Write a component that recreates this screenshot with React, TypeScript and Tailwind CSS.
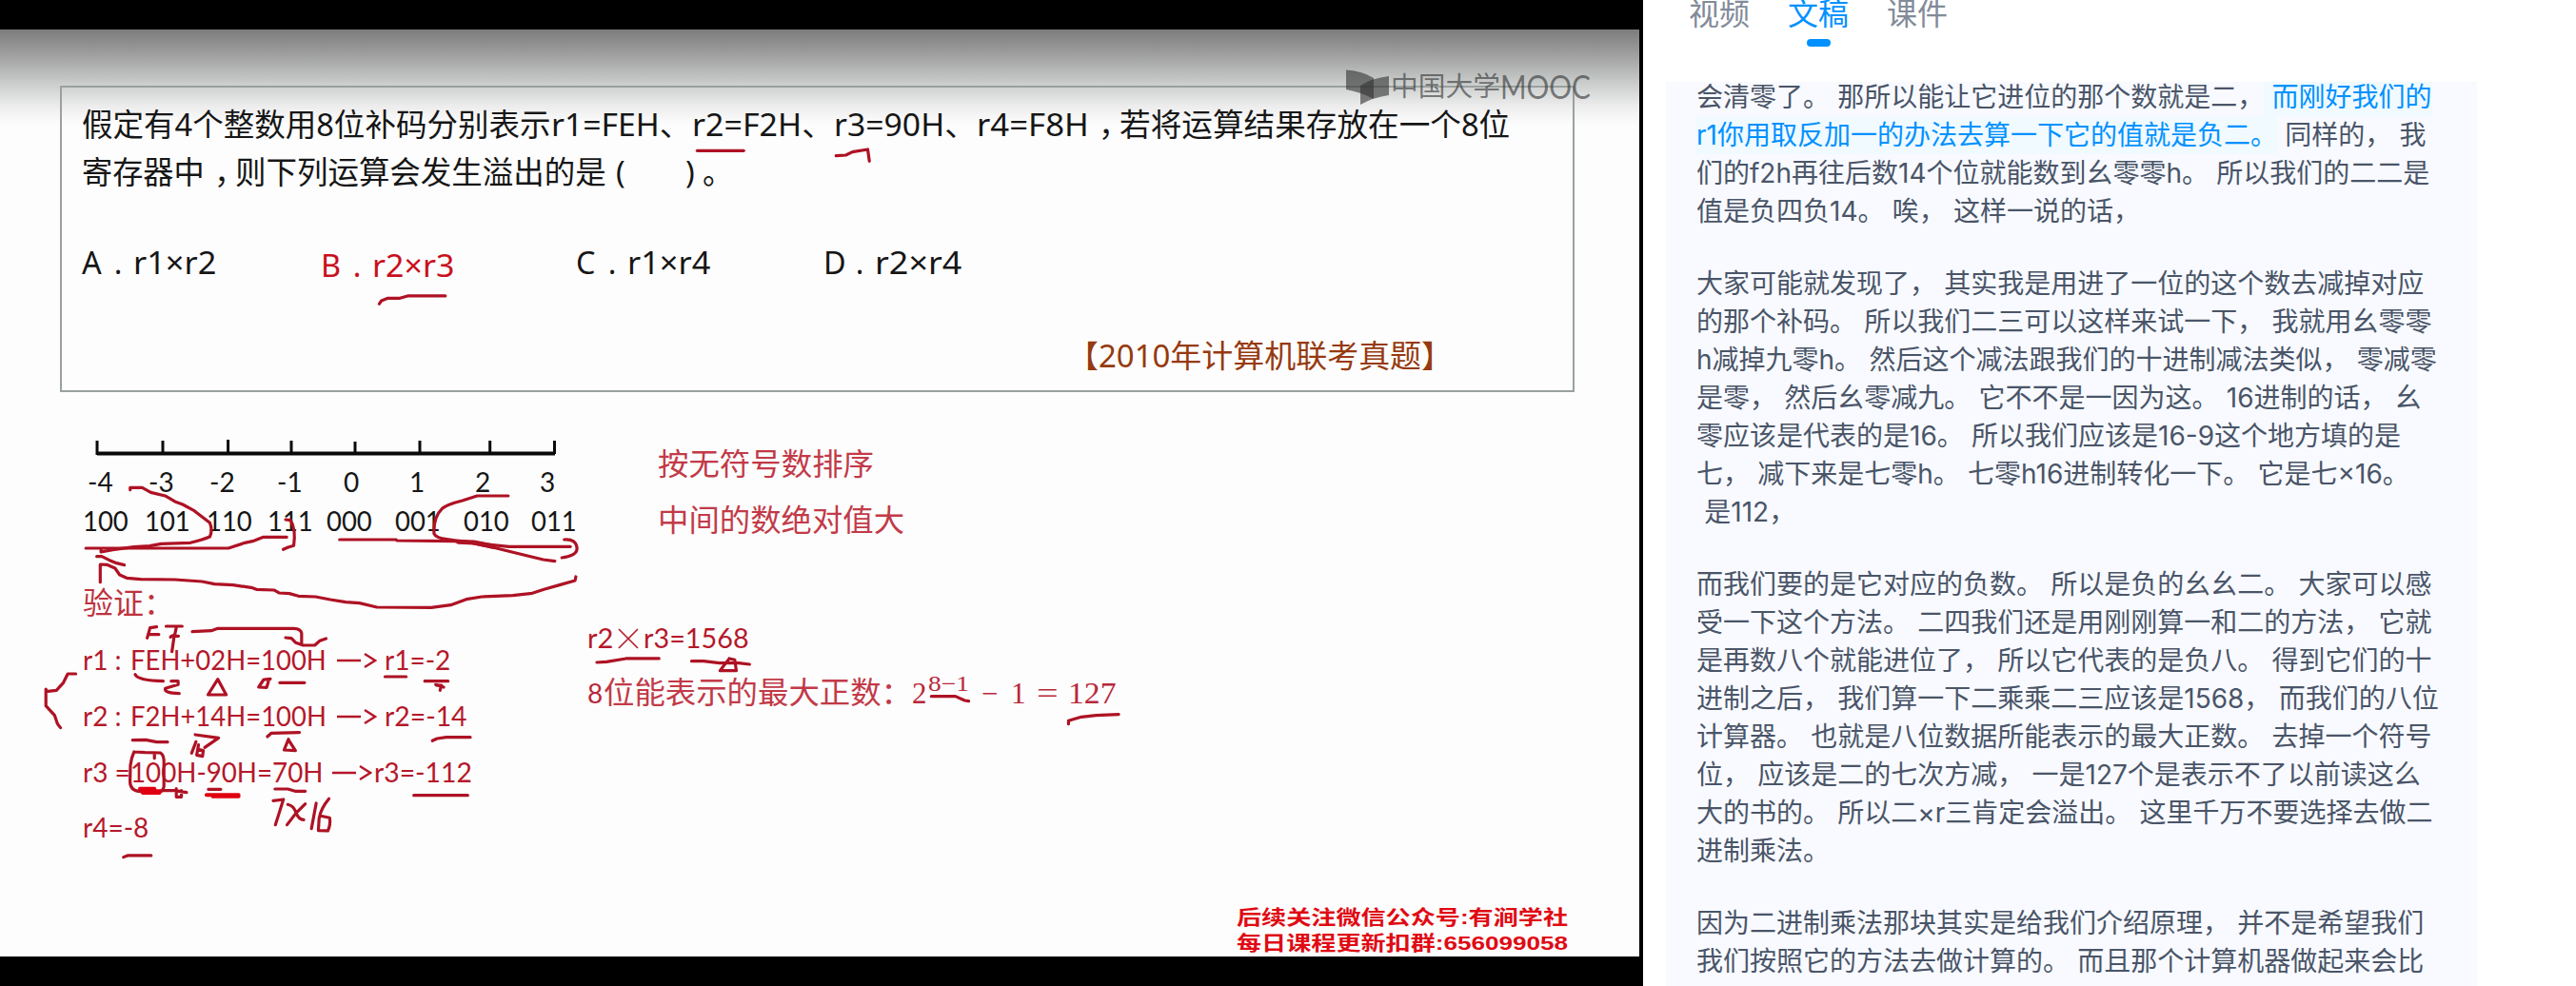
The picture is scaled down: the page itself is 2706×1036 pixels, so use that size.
import React, { useLayoutEffect, useRef } from "react";

const YAHEI = "font-['Noto_Sans','Noto_Sans_CJK_SC',sans-serif]";
const CALIBRI = "font-['Lato','Noto_Sans_CJK_SC',sans-serif]";
const CAMBRIA = "font-['Liberation_Serif','Noto_Sans_CJK_SC',serif]";

/* A run of text stretched or condensed to an exact width. */
function Fit({ w, className = "", children }: { w: number; className?: string; children: React.ReactNode }) {
  const ref = useRef<HTMLSpanElement>(null);
  useLayoutEffect(() => {
    const apply = () => {
      const el = ref.current;
      if (el && el.offsetWidth) el.style.transform = `scaleX(${w / el.offsetWidth})`;
    };
    apply();
    document.fonts?.ready.then(apply);
  }, [w]);
  return (
    <span className={`inline-block shrink-0 ${className}`} style={{ width: w }}>
      <span ref={ref} className="inline-block origin-left whitespace-pre">
        {children}
      </span>
    </span>
  );
}

function Option({ letter, expr, exprW = 87, className }: { letter: string; expr: string; exprW?: number; className: string }) {
  return (
    <div className={`flex shrink-0 ${className}`}>
      <span className="w-[22px]">{letter}</span>
      <span className="w-[32px] text-center">.</span>
      <Fit w={exprW}>{expr}</Fit>
    </div>
  );
}

function Question() {
  return (
    <section className={`ml-[63px] mt-[59px] h-[322px] w-[1591px] border-2 border-[#9aa1a0] pl-[21px] pt-[13px] text-[32.4px] leading-[50px] text-[#161616] ${YAHEI}`}>
      <div className="flex h-[50px] whitespace-pre">
        <Fit w={493}>假定有4个整数用8位补码分别表示</Fit>
        <Fit w={148}>r1=FEH、</Fit>
        <Fit w={149}>r2=F2H、</Fit>
        <Fit w={150}>r3=90H、</Fit>
        <Fit w={118}>r4=F8H</Fit>
        <span className="w-[32px] overflow-visible pl-[10px]">，</span>
        <Fit w={410}>若将运算结果存放在一个8位</Fit>
      </div>
      <div className="flex h-[49px] whitespace-pre">
        <Fit w={129}>寄存器中</Fit>
        <span className="w-[32px] overflow-visible pl-[10px]">，</span>
        <Fit w={390}>则下列运算会发生溢出的是</Fit>
        <span className="ml-[10px] w-[73px]">(</span>
        <span className="w-[18px]">)</span>
        <span>。</span>
      </div>
      <div className="mt-[46px] flex h-[50px]">
        <Option letter="A" expr="r1×r2" className="w-[251px]" />
        <Option letter="B" expr="r2×r3" exprW={86} className="w-[268px] pt-[3px] text-[#c8101c]" />
        <Option letter="C" expr="r1×r4" className="w-[260px]" />
        <Option letter="D" expr="r2×r4" exprW={91} className="w-[200px]" />
      </div>
      <div className="mt-[48px] h-[50px] pl-[1035px] text-[#963a10]">
        <Fit w={405}>【2010年计算机联考真题】</Fit>
      </div>
    </section>
  );
}

const LABELS: [string, string][] = [
  ["-4", "w-[64px]"],
  ["-3", "w-[64px]"],
  ["-2", "w-[71px]"],
  ["-1", "w-[70px]"],
  ["0", "w-[69px]"],
  ["1", "w-[69px]"],
  ["2", "w-[68px]"],
  ["3", "w-[30px]"],
];
const CODES: [string, string][] = [
  ["100", "w-[65px]"],
  ["101", "w-[65px]"],
  ["110", "w-[64px]"],
  ["111", "w-[62px]"],
  ["000", "w-[72px]"],
  ["001", "w-[72px]"],
  ["010", "w-[71px]"],
  ["011", "w-[50px]"],
];

function Step({ name, eq, eqW, gap, result, resW }: { name: string; eq: string; eqW: number; gap: string; result: string; resW: number }) {
  return (
    <div className="flex h-[59px]">
      <span className="w-[50px] whitespace-pre">{name}</span>
      <Fit w={eqW}>{eq}</Fit>
      <span className={`flex items-center ${gap}`}>
        <svg width="42" height="18" viewBox="0 0 42 18" className="shrink-0" fill="none" stroke="currentColor" strokeWidth="2.4">
          <path d="M0 9H25M29 2L40 9L29 16" />
        </svg>
      </span>
      <Fit w={resW}>{result}</Fit>
    </div>
  );
}

function NumberLine() {
  return (
    <div className="w-[530px] shrink-0 pt-[49px]">
      <svg className="ml-[13px] block" width="486" height="20" fill="none" stroke="#0a0a0a" strokeWidth="3">
        <path d="M2 15.5H483" strokeWidth="4" />
        <path d="M2 2V17M71 2V15M139.600 1V15M206 2V15M273 3V17M341 2V15M414.700 2V15M482.500 2V16" />
      </svg>
      <div className={`text-[28px] leading-[40px] text-[#161616] ${CALIBRI}`}>
        <div className="mt-[5px] flex h-[41px] pl-[5px]">
          {LABELS.map(([t, w]) => (
            <span key={t} className={w}>{t}</span>
          ))}
        </div>
        <div className="flex h-[40px]">
          {CODES.map(([t, w]) => (
            <span key={t} className={w}>
              <Fit w={48}>{t}</Fit>
            </span>
          ))}
        </div>
      </div>
      <div className={`mt-[47px] h-[40px] text-[32px] leading-[40px] text-[#bd3340] ${CAMBRIA}`}>验证：</div>
      <div className={`mt-[10px] text-[28px] leading-[59px] text-[#b5182a] ${CALIBRI}`}>
        <Step name="r1 :" eq="FEH+02H=100H" eqW={206} gap="ml-[11px] w-[50px]" result="r1=-2" resW={69} />
        <Step name="r2 :" eq="F2H+14H=100H" eqW={206} gap="ml-[11px] w-[50px]" result="r2=-14" resW={87} />
        <Step name="r3 =" eq="100H-90H=70H" eqW={202} gap="ml-[10px] w-[44px]" result="r3=-112" resW={103} />
        <div className="-mt-px"><Fit w={69}>r4=-8</Fit></div>
      </div>
    </div>
  );
}

function Derivation() {
  return (
    <div className="pt-[47px] text-[#b8283a]">
      <div className={`pl-[74px] text-[32px] leading-[59px] text-[#c23a48] ${CAMBRIA}`}>
        <div className="h-[59px]"><Fit w={227}>按无符号数排序</Fit></div>
        <div className="h-[59px]"><Fit w={259}>中间的数绝对值大</Fit></div>
      </div>
      <div className={`mt-[65px] flex h-[58px] text-[28px] leading-[57px] text-[#b5182a] ${CALIBRI}`}>
        <Fit w={27}>r2</Fit>
        <span className="flex w-[32px] items-center justify-center">
          <svg width="22" height="22" fill="none" stroke="currentColor" strokeWidth="1.6">
            <path d="M1 1L21 21M21 1L1 21" />
          </svg>
        </span>
        <Fit w={111}>r3=1568</Fit>
      </div>
      <div className="flex h-[57px] leading-[57px]">
        <span className={`w-[17px] text-[28px] ${CALIBRI}`}>8</span>
        <span className={`text-[32px] text-[#c23a48] ${CAMBRIA}`}>
          <Fit w={324}>位能表示的最大正数：</Fit>
        </span>
        <span className={`flex text-[31px] ${CAMBRIA}`}>
          <span className="w-[17px]">2</span>
          <span className="-mt-[10px] w-[56px] text-[23px]"><Fit w={43}>8−1</Fit></span>
          <span className="w-[31px]">−</span>
          <span className="w-[27px]">1</span>
          <span className="w-[33px]"><Fit w={22}>=</Fit></span>
          <Fit w={51}>127</Fit>
        </span>
      </div>
    </div>
  );
}

/* Red pen strokes over the slide, drawn in one group per area of the board. */
function PenStrokes() {
  return (
    <svg className="pointer-events-none absolute left-0 top-0" width="1726" height="1036" fill="none" stroke="#ae1224" strokeWidth="3.200" strokeLinejoin="round" strokeLinecap="round">
      <g className="[&_path]:[vector-effect:non-scaling-stroke]">
        <g transform="scale(.574 .3333)">
          <path d="M1276 475H1361" />
          <path d="M1530 491L1548 489L1560 479L1588 471L1591 508" />
          <path d="M694 958L698 948L710 940H732L746 933H815" />
        </g>
        <g transform="translate(0 430) scale(.40816 .3333)">
          <path d="M335 254V247H366L388 262L425 273L450 291L470 300L500 320L540 358Q548 380 540 402Q520 412 490 421L415 424L385 431L345 434L290 443L260 450L260 443" />
          <path d="M221 438H588L630 421L650 416L678 403H738" />
          <path d="M735 348L748 350Q762 380 756 430L740 436L729 442" />
          <path d="M874 411H1018L1022 414L1170 416L1240 424L1310 433H1468" />
          <path d="M1308 273H1228L1190 288Q1150 300 1138 313Q1115 340 1117 392Q1122 406 1150 410L1210 420L1270 436L1310 448L1350 460L1398 474L1428 479" />
          <path d="M1180 418L1220 420L1270 432" strokeWidth="5" />
          <path d="M1452 411Q1484 408 1485 440Q1484 462 1446 468" />
          <path d="M249 464H262L282 476L300 485L320 491" />
          <path d="M258 545V489L275 490L296 501L308 522L326 532L362 536L450 537L520 543L552 551L600 554L650 563L660 568L705 570L718 579L745 581L768 589L812 591L850 600L890 608L925 611L970 624L1110 625L1160 617L1200 599L1240 591L1320 587L1370 580L1400 568L1440 554L1480 540L1482 528" />
        </g>
        <g transform="translate(0 600) scale(.38265 .3333)">
          <path d="M430 176L412 179L404 211M412 200H436" />
          <path d="M456 174H500M484 178L480 200L468 208M470 205H490M478 206L472 254" />
          <path d="M528 191L580 188L598 181H806Q826 182 828 196V230M784 210L800 212L812 226L832 234H864L878 220L895 213" />
          <path d="M208 324H186L174 352L155 376L126 380V372V425L150 455L158 482L166 494" />
          <path d="M371 326Q378 345 448 347M470 347H489V358L454 370Q448 384 492 386" />
          <path d="M598 341L571 390H621Z" />
          <path d="M742 340L724 342L710 366L732 367L738 344M768 352H836" />
          <path d="M1057 333H1115M1166 347H1230M1198 360H1212L1208 376" />
          <path d="M1196 358L1218 366" />
          <path d="M364 533L400 532L430 539H460M536 516L600 526L562 556M538 538L526 574M545 548L540 580L556 584L558 566L544 562" />
          <path d="M734 522L745 511L822 509M792 530L780 564L811 566L792 532" />
          <path d="M1187 535L1200 528L1225 524H1291" />
          <path d="M368 570L398 572L440 573Q452 580 450 610V680Q448 698 420 698L380 694Q356 690 357 660L358 612Q360 590 368 570M424 576V590" />
          <path d="M384 686H424M390 694H442M392 699H438" stroke="#e00010" strokeWidth="4" />
          <path d="M445 692H480L512 698M484 686V712H498V692M572 688H606" />
          <path d="M567 706H655M584 710H655" stroke="#e00010" strokeWidth="4" />
          <path d="M755 687H790L810 694H838M1136 707H1284" />
          <path d="M750 724L778 720L766 764L756 800M790 736Q806 740 812 760Q820 784 834 784M838 734L812 764L788 800M868 732L855 812M903 718Q880 750 876 780L874 818L900 819Q908 800 905 778L880 772" />
          <path d="M339 902L350 897H415" />
        </g>
        <g transform="translate(580 440) scale(.40816 .3333)">
          <path d="M115 768L140 766L190 756H275M359 764H390L430 770H480L508 774M456 756L470 760L474 794H432L456 756" />
          <path d="M976 875H1038L1062 888L1072 890M1329 962V952L1362 940L1400 935L1458 932" />
        </g>
      </g>
    </svg>
  );
}

function Watermark() {
  return (
    <div className={`absolute left-[1413px] top-[72px] flex h-[40px] text-[#303030]/60 ${YAHEI}`}>
      <svg className="shrink-0" width="48" height="40" fill="currentColor">
        <path d="M1 1.500Q17 2 30 10V32Q17 25 1 22Z" />
        <path d="M46 8Q28 10 16 18V38Q30 30 46 28Z" />
      </svg>
      <span className="text-[28px] leading-[37px]"><Fit w={115}>中国大学</Fit></span>
      <span className="font-['Lato',sans-serif] text-[35px] leading-[37px]"><Fit w={95}>MOOC</Fit></span>
    </div>
  );
}

function Player() {
  return (
    <div className="relative h-[1036px] w-[1726px] shrink-0 overflow-hidden bg-black pt-[31px]">
      <div className="flex h-[974px] w-[1722px] flex-col bg-[#fdfdfd] bg-[linear-gradient(to_bottom,#7c7c7c_0px,#a4a4a4_30px,#cccfce_58px,#ececec_80px,#fdfdfd_100px)] bg-no-repeat">
        <Question />
        <div className="flex pl-[87px]">
          <NumberLine />
          <Derivation />
        </div>
        <div className="mt-auto flex flex-col items-end pr-[75px] font-['Liberation_Sans','Noto_Sans_CJK_SC',sans-serif] text-[21px] font-bold leading-[27px] text-[#e00a14]">
          <div className="h-[27px]"><Fit w={348}>后续关注微信公众号:有涧学社</Fit></div>
          <div className="h-[28px]"><Fit w={348}>每日课程更新扣群:656099058</Fit></div>
        </div>
      </div>
      <PenStrokes />
      <Watermark />
    </div>
  );
}

const HIGHLIGHT = "bg-[#f0faff] py-[3px] text-[#0091ff]";

const PARAGRAPHS: React.ReactNode[][] = [
  [
    <>会清零了。 那所以能让它进位的那个数就是二，<span className={HIGHLIGHT}> 而刚好我们的</span></>,
    <><span className={HIGHLIGHT}>r1你用取反加一的办法去算一下它的值就是负二。</span> 同样的， 我</>,
    "们的f2h再往后数14个位就能数到幺零零h。 所以我们的二二是",
    "值是负四负14。 唉， 这样一说的话，",
  ],
  [
    "大家可能就发现了， 其实我是用进了一位的这个数去减掉对应",
    "的那个补码。 所以我们二三可以这样来试一下， 我就用幺零零",
    "h减掉九零h。 然后这个减法跟我们的十进制减法类似， 零减零",
    "是零， 然后幺零减九。 它不不是一因为这。 16进制的话， 幺",
    "零应该是代表的是16。 所以我们应该是16-9这个地方填的是",
    "七， 减下来是七零h。 七零h16进制转化一下。 它是七×16。",
    " 是112，",
  ],
  [
    "而我们要的是它对应的负数。 所以是负的幺幺二。 大家可以感",
    "受一下这个方法。 二四我们还是用刚刚算一和二的方法， 它就",
    "是再数八个就能进位了， 所以它代表的是负八。 得到它们的十",
    "进制之后， 我们算一下二乘乘二三应该是1568， 而我们的八位",
    "计算器。 也就是八位数据所能表示的最大正数。 去掉一个符号",
    "位， 应该是二的七次方减， 一是127个是表示不了以前读这么",
    "大的书的。 所以二×r三肯定会溢出。 这里千万不要选择去做二",
    "进制乘法。",
  ],
  [
    "因为二进制乘法那块其实是给我们介绍原理， 并不是希望我们",
    "我们按照它的方法去做计算的。 而且那个计算机器做起来会比",
  ],
];

function Transcript() {
  return (
    <aside className="flex h-[1036px] flex-1 flex-col overflow-hidden bg-white font-['Inter','Noto_Sans_CJK_SC',sans-serif]">
      <nav className="flex h-[86px] shrink-0 gap-[40px] pl-[48px] text-[32px] leading-[30px] text-[#828b99]">
        <span>视频</span>
        <span className="flex flex-col items-center text-[#0091ff]">
          文稿
          <i className="mt-[11px] h-[8px] w-[25px] rounded-full bg-[#0091ff]" />
        </span>
        <span>课件</span>
      </nav>
      <div className="ml-[24px] w-[852px] flex-1 overflow-hidden bg-[#f8faff] pl-[32px]">
        <div className="-mt-[4px] flex flex-col gap-[36px] text-[28px] leading-[40px] text-[#4a5568] [word-spacing:0.4px]">
          {PARAGRAPHS.map((lines, i) => (
            <div key={i}>
              {lines.map((line, j) => (
                <p key={j} className="h-[40px] whitespace-pre">{line}</p>
              ))}
            </div>
          ))}
        </div>
      </div>
    </aside>
  );
}

export default function App() {
  return (
    <main className="flex h-[1036px] w-[2706px] overflow-hidden bg-white">
      <Player />
      <Transcript />
    </main>
  );
}
